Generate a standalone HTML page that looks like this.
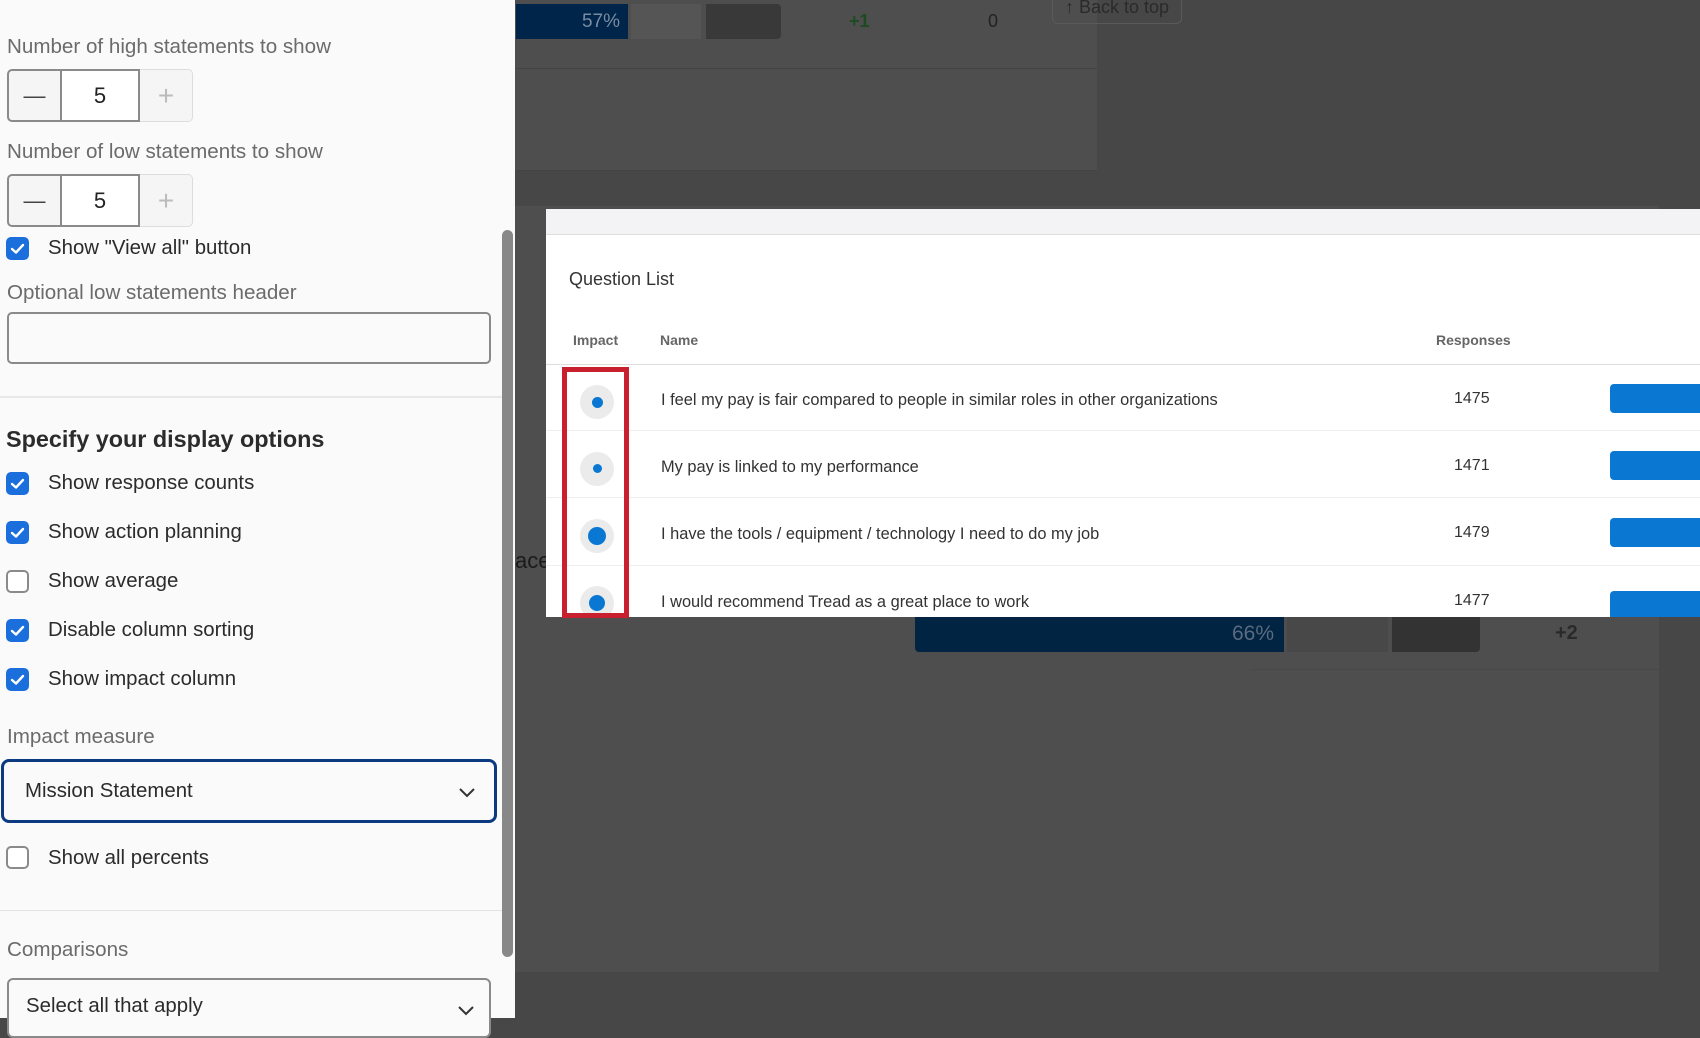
<!DOCTYPE html>
<html><head><meta charset="utf-8"><style>
*{box-sizing:border-box;margin:0;padding:0}
body{width:1700px;height:1018px;overflow:hidden;position:relative;background:#474747;font-family:"Liberation Sans",sans-serif}
.abs{position:absolute}
#side{left:0;top:0;width:515px;height:1018px;background:#fafafa}
.lbl{position:absolute;left:7px;font-size:20.6px;color:#6b6b6b}
.step{position:absolute;left:7px;width:186px;height:53px;display:flex}
.step div{height:100%;display:flex;align-items:center;justify-content:center;font-size:22px}
.s1{width:53px;border:2px solid #8a8a8a;border-right:none;border-radius:5px 0 0 5px;background:#f5f5f5;color:#444}
.s2{width:80px;border:2px solid #8a8a8a;background:#fff;color:#222}
.s3{width:53px;border:1px solid #ddd;border-left:none;border-radius:0 5px 5px 0;background:#f5f5f5;color:#bbb;font-size:28px!important}
.cb{position:absolute;left:6px;width:23px;height:23px;border-radius:5px;background:#1a6fdc}
.cb svg{position:absolute;left:4px;top:5px}
.cbe{position:absolute;left:6px;width:23px;height:23px;border-radius:5px;border:2px solid #8a8a8a;background:#fff}
.ct{position:absolute;left:48px;font-size:20.4px;color:#2b2b2b}
.sel{position:absolute;background:#fafafa;display:flex;align-items:center}
.row{position:absolute;left:546px;width:1154px;height:67px;border-bottom:1px solid #eee}
.circ{position:absolute;left:580px;width:34px;height:34px;border-radius:50%;background:#ebebeb}
.dot{position:absolute;border-radius:50%;background:#0a78d2}
.rt{position:absolute;left:661px;font-size:16.4px;color:#333}
.rn{position:absolute;left:1454px;font-size:16px;color:#333}
.bar{position:absolute;left:1610px;width:100px;height:29px;border-radius:4px;background:#0a78d2}
</style></head><body>
<div class="abs" style="left:515px;top:0;width:582px;height:171px;background:#4e4e4e;border-bottom:1px solid #444"></div>
<div class="abs" style="left:515px;top:68px;width:582px;height:1px;background:#444"></div>
<div class="abs" style="left:516px;top:4px;width:112px;height:35px;background:#00254a;color:#7a8aa0;font-size:19px;text-align:right;padding:7px 8px 0 0">57%</div>
<div class="abs" style="left:631px;top:4px;width:70px;height:35px;background:#555"></div>
<div class="abs" style="left:706px;top:4px;width:75px;height:35px;background:#393939;border-radius:0 4px 4px 0"></div>
<div class="abs" style="left:849px;top:11px;font-size:18px;font-weight:bold;color:#1c4a22">+1</div>
<div class="abs" style="left:988px;top:11px;font-size:18px;color:#222">0</div>
<div class="abs" style="left:1052px;top:-6px;width:130px;height:30px;border:1px solid #5a5a5a;border-radius:6px;color:#2a2a2a;font-size:18px;text-align:center;padding-top:2px">↑ Back to top</div>
<div class="abs" style="left:515px;top:206px;width:1144px;height:766px;background:#4e4e4e"></div>
<div class="abs" style="left:515px;top:548px;font-size:22px;color:#1a1a1a">ace</div>
<div class="abs" style="left:915px;top:617px;width:369px;height:35px;background:#002441;color:#5a6a80;font-size:21px;text-align:right;padding:5px 10px 0 0;border-radius:0 0 0 4px">66%</div>
<div class="abs" style="left:1287px;top:617px;width:101px;height:35px;background:#484848"></div>
<div class="abs" style="left:1392px;top:617px;width:88px;height:35px;background:#333;border-radius:0 0 4px 0"></div>
<div class="abs" style="left:1555px;top:622px;font-size:20px;font-weight:bold;color:#2a2a2a">+2</div>
<div class="abs" style="left:1250px;top:669px;width:409px;height:1px;background:#484848"></div>

<div class="abs" style="left:546px;top:209px;width:1154px;height:408px;background:#fff;overflow:hidden">
  <div class="abs" style="left:0;top:0;width:1154px;height:26px;background:#f3f3f6;border-bottom:1px solid #ddd"></div>
</div>
<div class="abs" style="left:569px;top:269px;font-size:18px;color:#333">Question List</div>
<div class="abs" style="left:573px;top:332px;font-size:14px;font-weight:bold;color:#666">Impact</div>
<div class="abs" style="left:660px;top:332px;font-size:14px;font-weight:bold;color:#666">Name</div>
<div class="abs" style="left:1436px;top:332px;font-size:14px;font-weight:bold;color:#666">Responses</div>
<div class="abs" style="left:546px;top:364px;width:1154px;height:1px;background:#ddd"></div>
<div class="row" style="top:364px"></div><div class="row" style="top:431px"></div><div class="row" style="top:499px"></div>
<div class="circ" style="top:385px"></div><div class="dot" style="left:592px;top:397px;width:11px;height:11px"></div>
<div class="circ" style="top:452px"></div><div class="dot" style="left:593px;top:464px;width:9px;height:9px"></div>
<div class="circ" style="top:519px"></div><div class="dot" style="left:588px;top:527px;width:18px;height:18px"></div>
<div class="abs" style="left:546px;top:566px;width:1154px;height:51px;overflow:hidden">
  <div class="abs" style="left:34px;top:20px;width:34px;height:34px;border-radius:50%;background:#ebebeb"></div>
  <div class="abs" style="left:43px;top:29px;width:16px;height:16px;border-radius:50%;background:#0a78d2"></div>
  <div class="abs" style="left:1064px;top:25px;width:100px;height:29px;border-radius:4px;background:#0a78d2"></div>
</div>
<div class="rt" style="top:391px">I feel my pay is fair compared to people in similar roles in other organizations</div>
<div class="rt" style="top:458px">My pay is linked to my performance</div>
<div class="rt" style="top:525px">I have the tools / equipment / technology I need to do my job</div>
<div class="rt" style="top:593px">I would recommend Tread as a great place to work</div>
<div class="rn" style="top:390px">1475</div><div class="rn" style="top:457px">1471</div><div class="rn" style="top:524px">1479</div><div class="rn" style="top:592px">1477</div>
<div class="bar" style="top:384px"></div><div class="bar" style="top:451px"></div><div class="bar" style="top:518px"></div>
<div class="abs" style="left:562px;top:367px;width:67px;height:251px;border:5px solid #c8202f"></div>

<div id="side" class="abs">
<div class="lbl" style="top:35px">Number of high statements to show</div>
<div class="step" style="top:69px"><div class="s1">—</div><div class="s2">5</div><div class="s3">+</div></div>
<div class="lbl" style="top:140px">Number of low statements to show</div>
<div class="step" style="top:174px"><div class="s1">—</div><div class="s2">5</div><div class="s3">+</div></div>
<div class="cb" style="top:237px"><svg width="15" height="13" viewBox="0 0 15 13"><path d="M2 7l4 3.5L13 3" stroke="#fff" stroke-width="2.4" fill="none" stroke-linecap="round" stroke-linejoin="round"/></svg></div>
<div class="ct" style="top:237px">Show "View all" button</div>
<div class="lbl" style="top:281px">Optional low statements header</div>
<div class="abs" style="left:7px;top:312px;width:484px;height:52px;border:2px solid #8a8a8a;border-radius:5px;background:#fafafa"></div>
<div class="abs" style="left:0;top:396px;width:502px;height:2px;background:#e8e8e8"></div>
<div class="abs" style="left:6px;top:426px;font-size:23.4px;font-weight:bold;color:#2b2b2b">Specify your display options</div>
<div class="cb" style="top:472px"><svg width="15" height="13" viewBox="0 0 15 13"><path d="M2 7l4 3.5L13 3" stroke="#fff" stroke-width="2.4" fill="none" stroke-linecap="round" stroke-linejoin="round"/></svg></div>
<div class="ct" style="top:472px">Show response counts</div>
<div class="cb" style="top:521px"><svg width="15" height="13" viewBox="0 0 15 13"><path d="M2 7l4 3.5L13 3" stroke="#fff" stroke-width="2.4" fill="none" stroke-linecap="round" stroke-linejoin="round"/></svg></div>
<div class="ct" style="top:521px">Show action planning</div>
<div class="cbe" style="top:570px"></div>
<div class="ct" style="top:570px">Show average</div>
<div class="cb" style="top:619px"><svg width="15" height="13" viewBox="0 0 15 13"><path d="M2 7l4 3.5L13 3" stroke="#fff" stroke-width="2.4" fill="none" stroke-linecap="round" stroke-linejoin="round"/></svg></div>
<div class="ct" style="top:619px">Disable column sorting</div>
<div class="cb" style="top:668px"><svg width="15" height="13" viewBox="0 0 15 13"><path d="M2 7l4 3.5L13 3" stroke="#fff" stroke-width="2.4" fill="none" stroke-linecap="round" stroke-linejoin="round"/></svg></div>
<div class="ct" style="top:668px">Show impact column</div>
<div class="lbl" style="top:725px">Impact measure</div>
<div class="sel" style="left:1px;top:759px;width:496px;height:64px;border:3px solid #0b3a80;border-radius:8px;padding-left:21px;font-size:20.4px;color:#2b2b2b">Mission Statement
<svg class="abs" style="right:18px;top:25px" width="18" height="11" viewBox="0 0 18 11"><path d="M2 2l7 7 7-7" stroke="#333" stroke-width="2" fill="none"/></svg></div>
<div class="cbe" style="top:846px"></div>
<div class="ct" style="top:847px">Show all percents</div>
<div class="abs" style="left:0;top:910px;width:502px;height:1px;background:#e3e3e3"></div>
<div class="lbl" style="top:938px">Comparisons</div>
<div class="sel" style="left:7px;top:978px;width:484px;height:60px;border:2px solid #8a8a8a;border-radius:6px;padding-left:17px;font-size:20.4px;color:#2b2b2b;align-items:flex-start;padding-top:15px">Select all that apply
<svg class="abs" style="right:14px;top:25px" width="18" height="11" viewBox="0 0 18 11"><path d="M2 2l7 7 7-7" stroke="#333" stroke-width="2" fill="none"/></svg></div>
<div class="abs" style="left:502px;top:230px;width:11px;height:727px;border-radius:6px;background:#888"></div>
</div>
</body></html>
